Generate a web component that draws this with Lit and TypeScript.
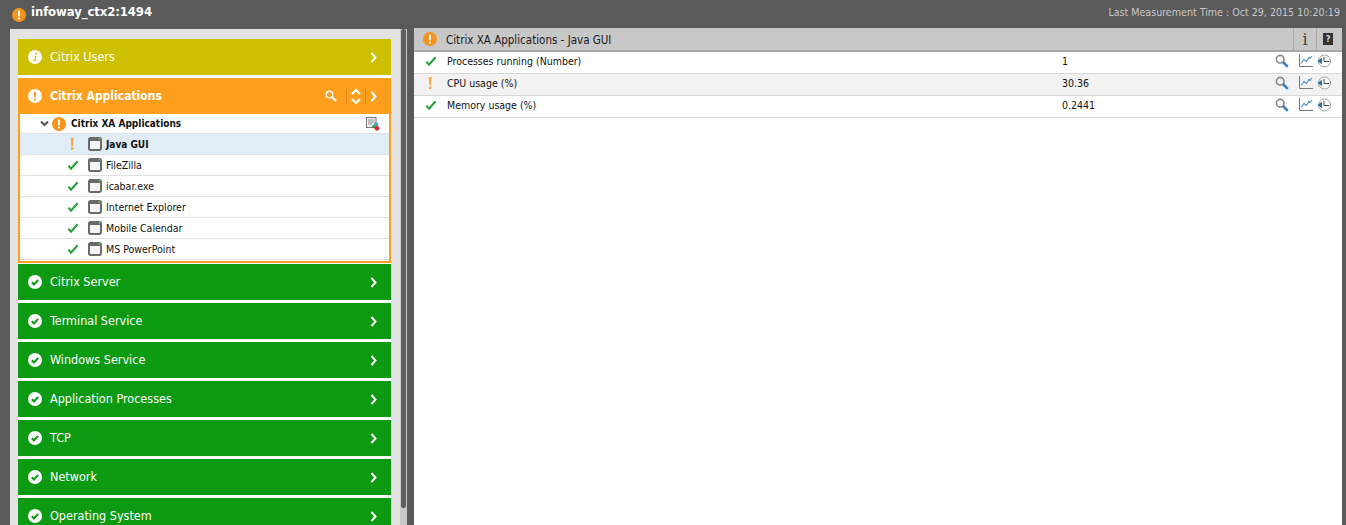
import { LitElement, html, css } from "lit";
import { customElement } from "lit/decorators.js";

const alertCircle = (size: number, bg: string, fg: string) => html`<svg width=${size} height=${size} viewBox="0 0 14 14"><circle cx="7" cy="7" r="7" fill=${bg}/><rect x="6" y="2.6" width="2" height="5.8" rx=".8" fill=${fg}/><rect x="6" y="9.4" width="2" height="2" rx=".5" fill=${fg}/></svg>`;
const okCircle = html`<svg width="14" height="14" viewBox="0 0 14 14"><circle cx="7" cy="7" r="7" fill="#fff"/><path d="M3.8 7.2l2.2 2.3 4.2-4.6" fill="none" stroke="#0c9a12" stroke-width="2"/></svg>`;
const infoCircle = html`<svg width="14" height="14" viewBox="0 0 14 14"><circle cx="7" cy="7" r="7" fill="#fff"/><path d="M7.4 2.8h1.8l-.4 1.8H7zM6.6 5.8h1.8l-1 4.2h1l-.3 1.1H5.3l.3-1.1h.6l.8-3.1h-.6z" fill="#ccc000"/></svg>`;
const chevron = html`<svg width="8" height="11" viewBox="0 0 8 11"><path d="M1.5 1l4 4.5-4 4.5" fill="none" stroke="#fff" stroke-width="2"/></svg>`;
const check = html`<svg width="14" height="12" viewBox="0 0 14 12"><path d="M3.4 6.6l2.6 3 6.6-7.4" fill="none" stroke="#22a03a" stroke-width="2.1"/></svg>`;
const bang = html`<svg width="14" height="12" viewBox="0 0 14 12"><path d="M5.8 0h2.8l-.5 8H6.3zM6 9.3h2.4V12H6z" fill="#f7a740"/></svg>`;
const win = html`<svg width="14" height="14" viewBox="0 0 14 14"><rect x="1" y="1" width="12" height="12" rx="1.4" fill="#f4f4f4" stroke="#6a6a6a" stroke-width="2"/><rect x="1" y="1" width="12" height="3" fill="#6a6a6a"/><rect x="10.6" y="1" width="1.8" height="1.4" fill="#5d5"/></svg>`;
const glass = (size: number, c: string, h: string) => html`<svg width=${size} height=${size} viewBox="0 0 14 14"><circle cx="5.2" cy="5.2" r="3.8" fill="none" stroke=${c} stroke-width="1.6"/><path d="M8 8l4.8 4.8" stroke=${h} stroke-width="2.6"/></svg>`;
const chart = html`<svg width="14" height="13" viewBox="0 0 14 13"><path d="M.5 0v12.5H14" fill="none" stroke="#777" stroke-width="1"/><path d="M2 9.5l3-4 2.5 2L10 3.5l1 1 2-2.5" fill="none" stroke="#4d90c8" stroke-width="1.1"/></svg>`;
const clock = html`<svg width="14" height="14" viewBox="0 0 14 14"><circle cx="7.5" cy="7" r="6" fill="#fff" stroke="#a0a0a0" stroke-width="1"/><path d="M7 2.8V7.5H12" fill="none" stroke="#444" stroke-width="1"/><path d="M0.5 7L5 3.8v6.4z" fill="#2f6fae"/></svg>`;
const cfg = html`<svg width="14" height="14" viewBox="0 0 14 14"><rect x=".5" y=".5" width="9.5" height="10" fill="#f2f2f2" stroke="#777"/><path d="M2 3h6.5M2 5h6.5M2 7h4" stroke="#888"/><circle cx="10" cy="7.5" r="2.2" fill="#4aa3c0"/><circle cx="7.5" cy="9.5" r="1.6" fill="#3a9a3a"/><circle cx="11" cy="11.3" r="2.4" fill="#d8263c"/></svg>`;

type Sev = "ok" | "warn";
const cards: string[] = ["Citrix Server", "Terminal Service", "Windows Service", "Application Processes", "TCP", "Network", "Operating System"];
const apps: { name: string; sev: Sev; sel?: boolean }[] = [
  { name: "Java GUI", sev: "warn", sel: true },
  { name: "FileZilla", sev: "ok" },
  { name: "icabar.exe", sev: "ok" },
  { name: "Internet Explorer", sev: "ok" },
  { name: "Mobile Calendar", sev: "ok" },
  { name: "MS PowerPoint", sev: "ok" },
];
const metrics: { name: string; value: string; sev: Sev }[] = [
  { name: "Processes running (Number)", value: "1", sev: "ok" },
  { name: "CPU usage (%)", value: "30.36", sev: "warn" },
  { name: "Memory usage (%)", value: "0.2441", sev: "ok" },
];

@customElement("app-root")
export class AppRoot extends LitElement {
  static styles = css`
    :host { display: block; height: 525px; overflow: hidden; background: #5a5a5a; font-family: "DejaVu Sans Condensed", "DejaVu Sans", sans-serif; font-size: 10.5px; color: #111; }
    svg { display: block; flex: none; }
    .top { height: 28px; display: flex; align-items: flex-start; padding: 0 6px 0 12px; box-sizing: border-box; }
    .top svg { margin-top: 8px; }
    .host { color: #fff; font-weight: bold; font-size: 13px; letter-spacing: -0.1px; margin: 4px 0 0 5px; line-height: 16px; }
    .time { margin-left: auto; color: #c8c8c8; font-size: 10.6px; line-height: 14px; margin-top: 5px; }
    .main { display: flex; height: 497px; padding: 0 4px 0 10px; }
    .left { width: 390px; margin-top: 1px; background: #e3e3e3; padding: 10px 9px 0 8px; box-sizing: border-box; overflow: hidden; flex: none; }
    .stack { background: #fff; display: flex; flex-direction: column; gap: 3px; }
    .card { height: 36px; display: flex; align-items: center; padding: 0 13px 0 10px; color: #fff; font-size: 12.5px; flex: none; }
    .card .lbl { margin-left: 8px; flex: 1; padding-bottom: 2px; }
    .yellow { background: #ccc000; }
    .orange { background: #fd9f1c; font-weight: bold; font-size: 12px; }
    .card.orange .lbl { padding-bottom: 0; }
    .green { background: #0c9a12; }
    .acts { display: flex; align-items: center; }
    .sep { width: 1px; height: 18px; background: #d98a1a; }
    .sep.a { margin: 0 4px 0 9px; }
    .sep.b { margin: 0 4px; }
    .open { margin: -3px 0 -2px; border: 2px solid #fd9f1c; border-top: 0; padding-bottom: 1px; background: #fff; }
    .tree-h { height: 19px; display: flex; align-items: center; background: #fff; padding: 0 9px 0 20px; font-weight: bold; font-size: 10px; border-bottom: 1px solid #e0e0e0; }
    .tree-h .ttl { margin-left: 5px; flex: 1; }
    .arrow { margin-right: 3px; }
    .row { height: 20px; display: flex; align-items: center; padding-left: 45px; border-bottom: 1px solid #e0e0e0; background: #fff; }
    .row.sel { background: #e1edf6; font-weight: bold; font-size: 10px; }
    .row .w { margin: 0 4px 0 9px; }
    .track { width: 7px; height: 496px; margin-top: 1px; background: #c9c9c9; flex: none; }
    .thumb { width: 5px; height: 479px; margin-left: 1px; background: #5e5e5e; border-radius: 2px; }
    .gap { width: 7px; flex: none; }
    .right { flex: 1; background: #fff; min-width: 0; }
    .rh { height: 22px; background: #c8c8c8; border-bottom: 2px solid #a8a8a8; display: flex; align-items: center; padding-left: 9px; font-size: 11.5px; color: #1a1a1a; }
    .rh .ttl { margin-left: 9px; flex: 1; padding-top: 1px; }
    .tool { height: 22px; display: flex; align-items: center; justify-content: center; border-left: 1px solid #aaa; box-sizing: border-box; }
    .tool.i { width: 23px; }
    .tool.q { width: 26px; padding-right: 3px; }
    .ibtn { font-family: "DejaVu Serif", serif; font-size: 16px; color: #444; }
    .qbtn { width: 10px; height: 12px; background: #333; color: #ddd; font-size: 9px; font-weight: bold; line-height: 12px; text-align: center; }
    .m { height: 22px; box-sizing: border-box; padding: 0 0 3px 9px; display: flex; align-items: center; border-bottom: 1px solid #d8d8d8; background: #fff; }
    .m.alt { background: #f2f2f2; }
    .m .n { margin-left: 10px; width: 615px; }
    .m .v { flex: 1; }
    .ic { display: flex; align-items: center; gap: 10px; padding-right: 11px; margin-top: -1px; }
    .ic svg + svg + svg { margin-left: -6px; }
  `;

  render() {
    return html`
      <div class="top">
        ${alertCircle(14, "#f7941d", "#fff")}
        <div class="host">infoway_ctx2:1494</div>
        <div class="time">Last Measurement Time : Oct 29, 2015 10:20:19</div>
      </div>
      <div class="main">
        <div class="left">
          <div class="stack">
            <div class="card yellow">${infoCircle}<span class="lbl">Citrix Users</span>${chevron}</div>
            <div class="card orange">
              ${alertCircle(14, "#fff", "#fd9f1c")}<span class="lbl">Citrix Applications</span>
              <div class="acts">
                ${glass(12, "#fff", "#fff")}
                <span class="sep a"></span>
                <svg width="10" height="17" viewBox="0 0 10 17"><path d="M1 6l4-4 4 4M1 11l4 4 4-4" fill="none" stroke="#fff" stroke-width="2"/></svg>
                <span class="sep b"></span>
                ${chevron}
              </div>
            </div>
            <div class="open">
              <div class="tree-h">
                <svg class="arrow" width="9" height="7" viewBox="0 0 9 7"><path d="M1 1.5l3.5 3.5L8 1.5" fill="none" stroke="#555" stroke-width="2"/></svg>
                ${alertCircle(14, "#f7941d", "#fff")}
                <span class="ttl">Citrix XA Applications</span>
                ${cfg}
              </div>
              ${apps.map(a => html`<div class="row ${a.sel ? "sel" : ""}">${a.sev === "ok" ? check : bang}<span class="w">${win}</span>${a.name}</div>`)}
            </div>
            ${cards.map(c => html`<div class="card green">${okCircle}<span class="lbl">${c}</span>${chevron}</div>`)}
          </div>
        </div>
        <div class="track"><div class="thumb"></div></div>
        <div class="gap"></div>
        <div class="right">
          <div class="rh">
            ${alertCircle(14, "#f7941d", "#fff")}
            <span class="ttl">Citrix XA Applications - Java GUI</span>
            <div class="tool i"><span class="ibtn">i</span></div>
            <div class="tool q"><span class="qbtn">?</span></div>
          </div>
          ${metrics.map((m, i) => html`<div class="m ${i === 1 ? "alt" : ""}">
            ${m.sev === "ok" ? check : bang}
            <span class="n">${m.name}</span>
            <span class="v">${m.value}</span>
            <div class="ic">${glass(14, "#888", "#3f7fb5")}${chart}${clock}</div>
          </div>`)}
        </div>
      </div>
    `;
  }
}
